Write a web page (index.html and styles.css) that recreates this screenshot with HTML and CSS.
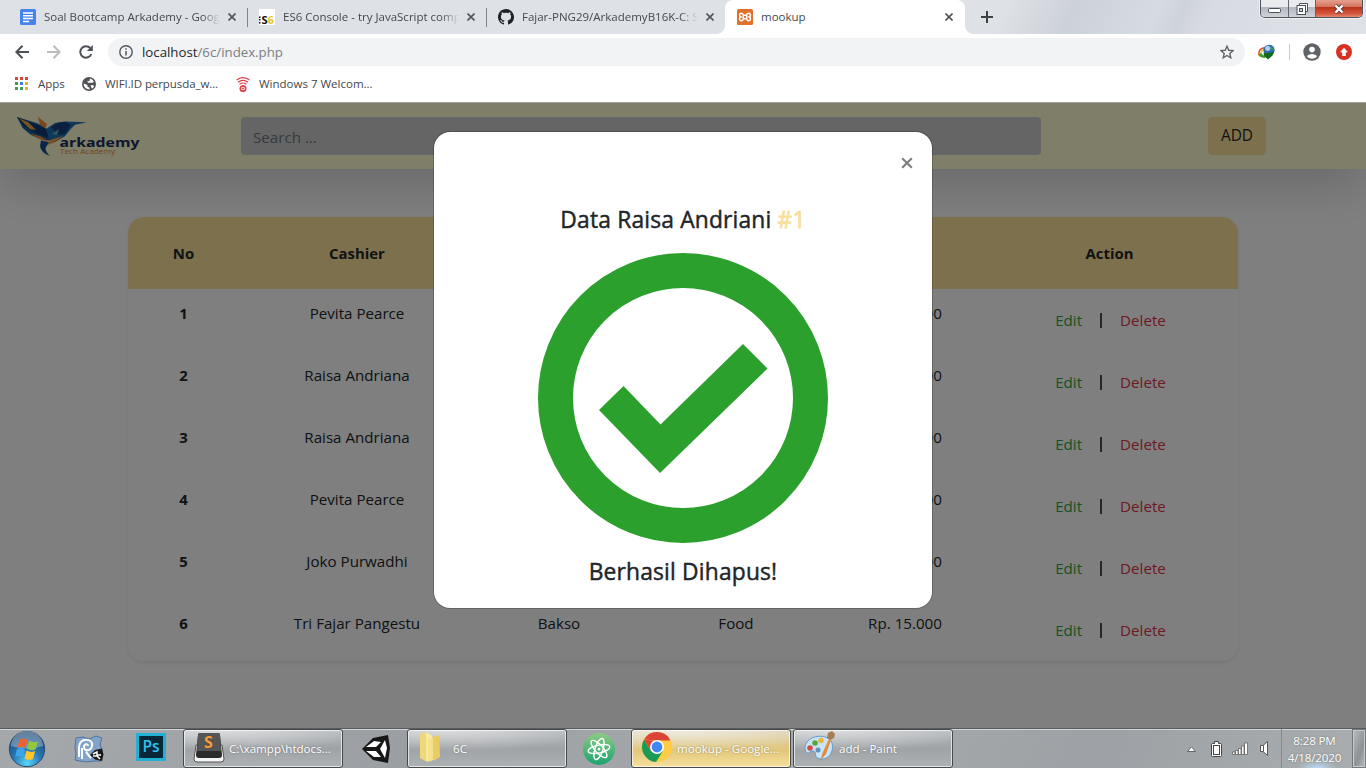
FILE: index.html
```html
<!DOCTYPE html>
<html lang="en">
<head>
<meta charset="utf-8">
<title>mookup</title>
<link rel="stylesheet" href="styles.css">
</head>
<body>
<div class="screen">
  <header class="tabstrip">
    <div class="tab">
      <svg width="16" height="16" viewBox="0 0 16 16"><rect width="16" height="16" rx="1.5" fill="#4683ec"/><path d="M3 4h10M3 6.8h10M3 9.6h10M3 12.4h6" stroke="#fff" stroke-width="1.5"/></svg>
      <span class="tab-title fade t1">Soal Bootcamp Arkademy - Google</span>
      <svg class="x" viewBox="0 0 8 8"><path d="M.5.5l7 7M7.500.500l-7 7"/></svg>
    </div>
    <div class="tab sep">
      <svg width="16" height="16" viewBox="0 0 16 16"><rect width="16" height="16" fill="#fff"/><path d="M0 7.500h1.500v1.500H0zM0 10h1.500v1.500H0zM0 13h1.500v1.500H0z" fill="#111"/><text x="2.500" y="14.500" class="es" textLength="12.500" lengthAdjust="spacingAndGlyphs">S<tspan class="six">6</tspan></text></svg>
      <span class="tab-title fade t2">ES6 Console - try JavaScript compiler</span>
      <svg class="x" viewBox="0 0 8 8"><path d="M.5.5l7 7M7.500.500l-7 7"/></svg>
    </div>
    <div class="tab sep">
      <svg width="16" height="16" viewBox="0 0 16 16" fill="#1f2226"><path d="M8 0C3.580 0 0 3.580 0 8c0 3.540 2.290 6.530 5.470 7.590.4.070.55-.17.55-.38 0-.19-.010-.82-.010-1.490-2.010.37-2.530-.49-2.690-.94-.090-.23-.48-.94-.82-1.130-.28-.15-.68-.52-.010-.53.63-.010 1.080.58 1.230.82.72 1.210 1.870.87 2.330.66.070-.52.28-.87.51-1.070-1.780-.2-3.640-.89-3.640-3.950 0-.87.31-1.590.82-2.150-.080-.2-.36-1.020.080-2.120 0 0 .67-.21 2.200.82.64-.18 1.320-.27 2-.27s1.360.09 2 .27c1.530-1.040 2.200-.82 2.200-.82.44 1.100.16 1.920.080 2.120.51.56.82 1.270.82 2.150 0 3.070-1.870 3.750-3.650 3.950.29.25.54.73.54 1.480 0 1.070-.010 1.930-.010 2.200 0 .21.15.46.55.38A8 8 0 0 0 8 0z"/></svg>
      <span class="tab-title fade t3">Fajar-PNG29/ArkademyB16K-C: Soal</span>
      <svg class="x" viewBox="0 0 8 8"><path d="M.5.5l7 7M7.500.500l-7 7"/></svg>
    </div>
    <div class="tab active">
      <svg width="16" height="16" viewBox="0 0 16 16"><rect width="16" height="16" rx="1.500" fill="#e0702c"/><path d="M5.600 6.200h4.800M5.600 9.800h4.800M6.300 5.500v5M9.700 5.500v5M6.300 6a1.900 1.900 0 1 0-2.500 2A1.900 1.900 0 1 0 6.300 10M9.700 6a1.900 1.900 0 1 1 2.500 2A1.900 1.900 0 1 1 9.700 10" fill="none" stroke="#fff" stroke-width="1.500"/></svg>
      <span class="tab-title t4">mookup</span>
      <svg class="x" viewBox="0 0 8 8"><path d="M.5.5l7 7M7.500.500l-7 7"/></svg>
    </div>
    <div class="newtab"><svg width="12" height="12" viewBox="0 0 12 12"><path d="M6 0v12M0 6h12" stroke="#3c4043" stroke-width="2"/></svg></div>
    <div class="winbtns">
      <div class="wb min"><svg width="13" height="6" viewBox="0 0 13 6"><rect x=".5" y=".5" width="12" height="4" rx="1" fill="#fff" stroke="#4a4f5a"/></svg></div>
      <div class="wb res"><svg width="13" height="12" viewBox="0 0 13 12"><path d="M3.500 2.500v-2h8v8h-2" fill="#fff" stroke="#4a4f5a"/><rect x="1" y="2.500" width="8.500" height="9" fill="#fff" stroke="#4a4f5a"/><rect x="3.500" y="5.500" width="3" height="3" fill="#ccc" stroke="#4a4f5a"/></svg></div>
      <div class="wb cls"><svg width="12" height="10" viewBox="0 0 12 10"><path d="M2.500 1.500l7 7M9.500 1.500l-7 7" stroke="#5d3335" stroke-width="4"/><path d="M2.500 1.500l7 7M9.500 1.500l-7 7" stroke="#fff" stroke-width="2.400"/></svg></div>
    </div>
  </header>

  <div class="toolbar">
    <svg class="nav" viewBox="0 0 14 14"><path d="M14 7H1.500M7.500 .8L1.300 7l6.200 6.200" stroke="#4d5156"/></svg>
    <svg class="nav" viewBox="0 0 14 14"><path d="M0 7h12.500M6.500 .8L12.700 7l-6.200 6.200" stroke="#babcbe"/></svg>
    <svg class="nav" viewBox="0 0 14 14"><path d="M12.300 9A5.700 5.700 0 1 1 11.300 3.200" stroke="#4d5156"/><path d="M13.800 0v6H7.800z" fill="#4d5156"/></svg>
    <div class="omnibox">
      <svg width="14" height="14" viewBox="0 0 14 14"><circle cx="7" cy="7" r="6.200" fill="none" stroke="#55585c" stroke-width="1.400"/><path d="M7 6v4.500M7 3.300v1.500" stroke="#55585c" stroke-width="1.500"/></svg>
      <span class="url">localhost<span>/6c/index.php</span></span>
      <svg class="star" width="14" height="14" viewBox="0 0 24 24"><path d="M12 2l3 7 7.500.600-5.700 5 1.700 7.400L12 18l-6.500 4 1.700-7.400-5.700-5L9 9z" fill="none" stroke="#5f6368" stroke-width="2.300"/></svg>
    </div>
    <svg class="idm" width="17" height="16" viewBox="0 0 17 16"><path d="M8 3.500Q2 4 1 8t3 4.500" fill="none" stroke="#d9542a" stroke-width="1.500"/><path d="M8 5Q3 6 3 9t2 3" fill="none" stroke="#f0c93a" stroke-width="1.500"/><path d="M1 10q1 4 6 4l2-2q-4 0-6-3z" fill="#3f9d2c"/><circle cx="11" cy="6.300" r="5.600" fill="#2d6ab0"/><circle cx="9.700" cy="4.300" r="2.600" fill="#a9cff1"/><path d="M5.500 8.500q5 1.500 10.500-1l-1.500 4-4.500 4-4-4z" fill="#14691c"/><path d="M12 3q3 0 3.500 2.500l-2 1z" fill="#4d9b4a"/></svg>
    <i class="tb-sep"></i>
    <svg class="user" width="18" height="18" viewBox="0 0 18 18"><circle cx="9" cy="9" r="8.700" fill="#5f6368"/><circle cx="9" cy="6.600" r="2.800" fill="#fff"/><path d="M3.800 13q5.200-4 10.400 0a6.200 6.200 0 0 1-10.400 0z" fill="#fff"/></svg>
    <svg class="upd" width="16" height="16" viewBox="0 0 16 16"><circle cx="8" cy="8" r="8" fill="#d93025"/><path d="M8 3.800l4 4.400H9.800V12H6.200V8.200H4z" fill="#fff"/></svg>
  </div>

  <nav class="bookmarks">
    <svg width="14" height="14" viewBox="0 0 14 14"><path d="M0 0h3v3H0zM5 0h3v3H5zM10 0h3v3h-3z" fill="#d64539"/><path d="M0 5h3v3H0zM0 10h3v3H0zM5 10h3v3H5z" fill="#43985b"/><path d="M5 5h3v3H5z" fill="#3f7fe0"/><path d="M10 5h3v3h-3zM10 10h3v3h-3z" fill="#e9ae2c"/></svg>
    <span class="b1">Apps</span>
    <svg class="g" width="14" height="14" viewBox="0 0 14 14"><circle cx="7" cy="7" r="7" fill="#505356"/><path d="M1.500 6.500l4 1.500v2l2 .5v2Q2 12 1.500 6.500zM8 1.500q3 .500 4 3.500L9.500 6 8 5.500 6.500 6 5 4.500l2.500-.5zM8.500 8.500l2-.5 1.700 1q-.7 1.800-2.200 2.700z" fill="#fff"/></svg>
    <span class="b2">WIFI.ID perpusda_w...</span>
    <svg class="w" width="14" height="15" viewBox="0 0 14 15"><g fill="none" stroke="#dc4349" stroke-width="1.200"><path d="M.6 3Q7-1.800 13.400 3M2 5.300Q7 1.500 12 5.300M3.600 7.300Q7 4.700 10.400 7.300"/><circle cx="7" cy="11.500" r="2.700" stroke-width="1.700"/></g><circle cx="7" cy="11.500" r="1" fill="#dc4349"/></svg>
    <span class="b3">Windows 7 Welcom...</span>
  </nav>

  <main class="page">
    <div class="navbar">
      <svg class="logo" width="124" height="42" viewBox="0 0 124 42">
        <path d="M21 1l9 7-2 5-5-4z" fill="#f08c3a"/>
        <path d="M0 1l21 6.500L32 15l4 10-11-1.300-11.300-5L5.700 12z" fill="#1b5b9e"/>
        <path d="M0 1l6 8 14 9 14 5-4-10z" fill="#123a75"/>
        <path d="M2 2.500l9 3.500 8 8-6-1z" fill="#f5a93a"/>
        <path d="M13 17.500l10 2.500 8 5-6-1z" fill="#ee8830"/>
        <path d="M29 13l9-6 10-1.500 22 .8-12 2.500-5 5-5 6.500-12 6.700-4-4z" fill="#1c6fb3"/>
        <path d="M34 11l8-4.500 7-.5 5 3-6 9-6 1z" fill="#17417c"/>
        <path d="M35 18l7-5-2 6z" fill="#57bdb3"/>
        <path d="M33 24l13-4-10 7-6 2z" fill="#f3a13d"/>
        <path d="M24 24.500l8 1.500-3.500 6q0 4 4.500 8-9-3-10-10z" fill="#174a91"/>
        <text x="42.500" y="30.700" class="logo-a" textLength="80" lengthAdjust="spacingAndGlyphs">arkademy</text>
        <text x="43" y="38.400" class="logo-b" textLength="55" lengthAdjust="spacingAndGlyphs">Tech Academy</text>
      </svg>
      <div class="search">Search ...</div>
      <button class="add">ADD</button>
    </div>

    <section class="card">
      <div class="row head"><b>No</b><b>Cashier</b><b>Product</b><b>Category</b><b>Price</b><b>Action</b></div>
      <div class="row"><b>1</b><span>Pevita Pearce</span><span></span><span></span><span>Rp. 10.000</span><div class="act"><a class="edit">Edit</a><i></i><a class="del">Delete</a></div></div>
      <div class="row"><b>2</b><span>Raisa Andriana</span><span></span><span></span><span>Rp. 10.000</span><div class="act"><a class="edit">Edit</a><i></i><a class="del">Delete</a></div></div>
      <div class="row"><b>3</b><span>Raisa Andriana</span><span></span><span></span><span>Rp. 10.000</span><div class="act"><a class="edit">Edit</a><i></i><a class="del">Delete</a></div></div>
      <div class="row"><b>4</b><span>Pevita Pearce</span><span></span><span></span><span>Rp. 10.000</span><div class="act"><a class="edit">Edit</a><i></i><a class="del">Delete</a></div></div>
      <div class="row"><b>5</b><span>Joko Purwadhi</span><span></span><span></span><span>Rp. 10.000</span><div class="act"><a class="edit">Edit</a><i></i><a class="del">Delete</a></div></div>
      <div class="row"><b>6</b><span>Tri Fajar Pangestu</span><span>Bakso</span><span>Food</span><span>Rp. 15.000</span><div class="act"><a class="edit">Edit</a><i></i><a class="del">Delete</a></div></div>
    </section>

    <div class="backdrop"></div>
    <div class="modal">
      <div class="modal-close"><svg width="12" height="12" viewBox="0 0 12 12"><path d="M1.200 1.200l9.600 9.600M10.800 1.200l-9.600 9.600" stroke="#7f7f7f" stroke-width="2.200"/></svg></div>
      <h4 class="m1">Data Raisa Andriani <span>#1</span></h4>
      <svg class="check" width="290" height="290" viewBox="0 0 290 290"><circle cx="145" cy="145" r="127.500" fill="none" stroke="#2ca02c" stroke-width="35"/><path d="M61 157l24.500-24 37 38.500L205 91l24.500 24.500L122 220z" fill="#2ca02c"/></svg>
      <h4 class="m2">Berhasil Dihapus!</h4>
    </div>
  </main>

  <footer class="taskbar">
    <svg class="start" width="38" height="38" viewBox="0 0 38 38"><defs><radialGradient id="orb" cx=".5" cy=".9" r=".8"><stop offset="0" stop-color="#58d8fa"/><stop offset=".5" stop-color="#2877b5"/><stop offset="1" stop-color="#214e7c"/></radialGradient></defs><circle cx="19" cy="19" r="17.700" fill="url(#orb)" stroke="#284d6d"/><path d="M3 16a16 15 0 0 1 32 0q-16 5-32 0z" fill="#fff" opacity=".3"/><path d="M11.500 9.500q4-2 8 .5l-2 8q-4-2-8-.5z" fill="#ee6130"/><path d="M21 10.800q4.500 2.500 9 .5l-2.300 8q-4.200 2-8.700-.5z" fill="#90c83f"/><path d="M9 19q4-2 8 .5l-2 8q-4-2.500-8-.5z" fill="#3ea4ea"/><path d="M18.500 20.500q4.500 2.500 8.700.5l-2.200 8q-4.500 2-8.500-.5z" fill="#fdc729"/></svg>
    <svg class="pp" width="30" height="28" viewBox="0 0 30 28"><path d="M2 3l7-1 6 2 7-3 6 2-2 6 2 6-2 6 1 5-7 0-7 1-7-1-5-1 1-6-1-7z" fill="#83a3c7" stroke="#4d74a3"/><path d="M5 22V12c0-10 15-9 13-1-1 5-8 6-8 1 0-3 4-4 4-1M12 17l5 6M8 24V13" fill="none" stroke="#fff" stroke-width="2"/><path d="M16 20l5-5 7-1.500 1.500 6-1.500 6.500-7-1.500z" fill="#1b1b1b"/><path d="M19 19l4-2v3h4M19 21h4l3 3" fill="none" stroke="#fff" stroke-width="1.500"/></svg>
    <div class="ps">Ps</div>
    <div class="task tk1">
      <svg width="32" height="32" viewBox="0 0 32 32"><path d="M3 14L1 28q0 3 3 3h24q3 0 3-3l-2-14z" fill="#f3f3f3" stroke="#555"/><path d="M5 4q0-2 2-2h18q2 0 2 2l2 20q0 3-3 3H6q-3 0-3-3z" fill="#2b2b2b"/><path d="M5 4q0-2 2-2h18q2 0 2 2l1 16H4z" fill="#565656"/><text x="11" y="17" class="sub">S</text></svg>
      <span>C:\xampp\htdocs...</span>
    </div>
    <svg class="unity" width="30" height="30" viewBox="0 0 30 30"><path d="M1 15L12 4l15-3 2 13-2 15-15-3z" fill="#171717"/><path d="M5 13l8-6 7 1-5 5zM5 17h10l5 6-7 0zM24 6l2 8-2 10-5-9z" fill="#fff"/></svg>
    <div class="task tk2">
      <svg width="32" height="32" viewBox="0 0 32 32"><path d="M3 3l6-2 6 4 0 25-5 1-7-4z" fill="#efd878"/><path d="M9 1l6 4v22l-6 3z" fill="#f9e9a4"/><path d="M15 6l7-2 1 22-7 4z" fill="#e8cd66"/><path d="M11 8l5-1v22l-5 1z" fill="#f6e28c"/></svg>
      <span>6C</span>
    </div>
    <svg class="atom" width="32" height="32" viewBox="0 0 32 32"><defs><linearGradient id="at" x1="0" y1="0" x2="0" y2="1"><stop offset="0" stop-color="#8ccb82"/><stop offset="1" stop-color="#1ba36e"/></linearGradient></defs><circle cx="16" cy="16" r="16" fill="url(#at)"/><g fill="none" stroke="#fff" stroke-width="1.400"><ellipse cx="16" cy="16" rx="11" ry="4" transform="rotate(-12 16 16)"/><ellipse cx="16" cy="16" rx="11" ry="4" transform="rotate(48 16 16)"/><ellipse cx="16" cy="16" rx="11" ry="4" transform="rotate(108 16 16)"/></g><circle cx="16" cy="16" r="1.500" fill="#fff"/></svg>
    <div class="task tk3">
      <svg width="32" height="32" viewBox="0 0 32 32"><circle cx="16" cy="16" r="15" fill="#fc4"/><path d="M3 8.500A15 15 0 0 1 29.500 9.500H16z" fill="#dc4437"/><path d="M3 8.500A15 15 0 0 0 15 31l7-11-12 0z" fill="#1a9b55"/><path d="M3 8.500L10 20l6-10z" fill="#dc4437"/><circle cx="16" cy="16" r="7" fill="#fff"/><circle cx="16" cy="16" r="5.400" fill="#4285f4"/></svg>
      <span>mookup - Google...</span>
    </div>
    <div class="task tk4">
      <svg width="32" height="32" viewBox="0 0 32 32"><path d="M2 16C4 3 26 2 29 12c3 12-8 20-16 14-1-3 0-6-3-6-4 0-4 3-6 2-2-2-2-4-2-6z" fill="#c9e4f6" stroke="#609dc9"/><circle cx="7" cy="17" r="2.800" fill="#d84a42"/><circle cx="12" cy="12" r="2.800" fill="#55a83d"/><circle cx="18" cy="9.500" r="2.800" fill="#eeb63c"/><circle cx="15" cy="19" r="2.500" fill="#6495b8"/><path d="M17 30l3-9 6-13 2 1-5 14z" fill="#e58a3b"/><path d="M24 7l1-5 4-2 3 3-1 4-4 2z" fill="#a87c55"/></svg>
      <span>add - Paint</span>
    </div>
    <div class="tray">
      <svg width="9" height="6" viewBox="0 0 9 6"><path d="M.5 5.500h8L4.500 .8z" fill="#fff" stroke="#666"/></svg>
      <svg class="bat" width="11" height="16" viewBox="0 0 11 16"><path d="M3.500 .5h4v2H9.500q1 0 1 1v11q0 1-1 1h-8q-1 0-1-1v-11q0-1 1-1h2z" fill="#fff" stroke="#444"/><rect x="2.500" y="4.500" width="6" height="9" fill="#fff" stroke="#444"/></svg>
      <svg class="sig" width="17" height="13" viewBox="0 0 17 13"><path d="M.5 10h2.500v2.500H.5zM3.500 8.500h2.500v4H3.500zM6.500 6.500h2.500v6H6.500zM9.500 4h2.500v8.500H9.500zM12.500 1h3v11.500h-3z" fill="#fff" stroke="#555" stroke-width=".7"/></svg>
      <svg class="vol" width="9" height="15" viewBox="0 0 9 15"><path d="M.5 4.500h2.500l4.500-4v14l-4.500-4H.5z" fill="#fff" stroke="#555"/><path d="M3.500 4.500v6" stroke="#555"/></svg>
      <div class="clock"><span class="c1">8:28 PM</span><span class="c2">4/18/2020</span></div>
      <i class="desk"></i>
    </div>
  </footer>
</div>
</body>
</html>
```
FILE: styles.css
```css
* { box-sizing: border-box; }
body { margin: 0; font-family: "Open Sans", "Noto Sans", sans-serif; background: #fff; }
svg { flex: none; display: block; }
.screen { width: 1366px; height: 768px; display: flex; flex-direction: column; overflow: hidden; }

.tabstrip { height: 34px; flex: none; display: flex; padding-left: 8px; background: linear-gradient(115deg, #dee1e5 0 73%, #cdd1d9 78%, #d6dae2 84%, #cfd3dc 86%, #d8dbe2 88%, #dfe3e8 100%); }
.tab { position: relative; width: 239px; display: flex; align-items: center; padding: 0 11px 0 12px; background: #dee1e6; border-radius: 8px 8px 0 0; }
.tab.sep::before { content: ""; position: absolute; left: 0; top: 8px; width: 1px; height: 19px; background: #80858b; }
.tab-title { margin-left: 8px; width: 176px; overflow: hidden; white-space: nowrap; font-size: 11.500px; line-height: 18px; color: #45494d; }
.fade { -webkit-mask-image: linear-gradient(to right, #000 158px, transparent 176px); mask-image: linear-gradient(to right, #000 158px, transparent 176px); }
.x { width: 8px; height: 8px; margin-left: auto; stroke: #505357; stroke-width: 1.600; fill: none; }
.tab.active { width: 240px; padding-right: 12px; background: #fff; z-index: 1; }
.tab.active::before, .tab.active::after { content: ""; position: absolute; bottom: 0; width: 8px; height: 8px; }
.tab.active::before { left: -8px; background: radial-gradient(circle at 0 0, transparent 7.500px, #fff 8px); }
.tab.active::after { right: -8px; background: radial-gradient(circle at 100% 0, transparent 7.500px, #fff 8px); }
.newtab { width: 28px; height: 28px; margin: 3px 0 0 8px; border-radius: 50%; background: #dee1e6; display: flex; align-items: center; justify-content: center; }
.winbtns { margin-left: auto; margin-right: 3px; height: 18px; width: 103px; display: flex; border: 1px solid #50545c; border-top: 0; border-radius: 0 0 5px 5px; overflow: hidden; box-shadow: 0 0 0 1px rgba(255,255,255,.5); }
.wb { display: flex; align-items: center; justify-content: center; background: linear-gradient(#e9eaed 0 40%, #b2b6c0 42%, #d0d3da); }
.min { width: 28px; padding-top: 4px; border-right: 1px solid #62666e; }
.res { width: 27px; border-right: 1px solid #62666e; }
.cls { flex: 1; background: linear-gradient(#e5a08c, #d4735b 40%, #bb3318 44%, #d4573d 80%, #e28a70); }
.es { font: 700 11px "Open Sans", sans-serif; fill: #111; }
.six { fill: #eec22f; }

.toolbar { height: 35px; flex: none; display: flex; align-items: center; padding: 1px 14px 0 15px; background: #fff; }
.nav { width: 14px; height: 14px; margin-right: 18px; fill: none; stroke-width: 2; }
.toolbar .nav:nth-child(3) { margin-right: 15px; }
.omnibox { width: 1137px; height: 28px; display: flex; align-items: center; padding: 0 11px; background: #f1f3f4; border-radius: 14px; }
.url { margin-left: 9px; font-size: 13.250px; line-height: 20px; color: #24272a; }
.url span { color: #7b8085; }
.star { margin-left: auto; }
.idm { margin-left: 13px; }
.tb-sep { width: 1px; height: 16px; margin-left: 14px; background: #c9cbce; }
.user { margin-left: 13px; }
.upd { margin-left: 15px; }

.bookmarks { height: 33px; flex: none; display: flex; align-items: center; padding: 0 15px 3px; font-size: 11.500px; line-height: 16px; color: #43474b; white-space: nowrap; background: #fff; }
.b1 { margin-left: 9px; width: 27px; }
.g { margin-left: 17px; }
.b2 { margin-left: 9px; width: 113px; letter-spacing: -.08px; }
.w { margin-left: 18px; }
.b3 { margin-left: 9px; }

.page { position: relative; height: 626px; flex: none; border-top: 1px solid #a5a29d; background: #fff; font-size: 15.150px; line-height: 24px; color: #212529; overflow: hidden; }
.navbar { height: 66px; display: flex; align-items: center; padding: 0 16px; background: #fffcd0; box-shadow: 0 16px 48px rgba(0,0,0,.175); }
.logo { margin: 2px 0 0 1px; }
.logo-a { font: 700 11.500px "Open Sans", sans-serif; fill: #1b2c60; }
.logo-b { font: 6.500px "Open Sans", sans-serif; fill: #e38a3c; }
.search { width: 800px; height: 38px; margin-left: 100px; padding: 8px 12px; border-radius: 4px; background: #cacaca; color: #6c757d; line-height: 24px; }
.add { width: 58px; height: 38px; margin-left: 167px; padding: 0 0 1px; border: 0; border-radius: 4px; background: #fae39b; color: #212529; font: 15.400px "Open Sans", sans-serif; }
.card { width: 1110px; margin: 48px 0 0 128px; border-radius: 16px; overflow: hidden; background: #fff; box-shadow: 0 2px 4px rgba(0,0,0,.075); }
.row { height: 62px; display: grid; grid-template-columns: 111px 236px 168px 186px 152px 257px; padding-top: 12px; text-align: center; }
.row b { font-size: 14.900px; }
.row.head { height: 72px; padding-top: 24px; background: #fae39b; }
.act { display: flex; justify-content: center; align-items: flex-start; padding: 7px 0 0 2px; }
.act i { width: 2px; height: 15px; margin: 5px 18px 0; background: #4a4e52; }
.edit { color: #28a745; }
.del { color: #dc3545; }
.backdrop { position: absolute; inset: 0; background: rgba(0,0,0,.5); }
.modal { position: absolute; left: 433px; top: 28px; width: 500px; height: 478px; display: flex; flex-direction: column; align-items: center; background: #fff; background-clip: padding-box; border: 1px solid rgba(0,0,0,.2); border-radius: 17px; }
.modal-close { align-self: flex-end; margin: 25px 19px 0 0; }
.modal h4 { margin: 0; font-size: 22.800px; line-height: 29px; font-weight: 500; letter-spacing: .18px; white-space: nowrap; -webkit-text-stroke: .45px currentColor; }
.modal h4 span { color: #f7e09c; -webkit-text-stroke-width: .8px; }
.modal .m1 { margin-top: 36px; }
.check { margin-top: 19px; }
.modal .m2 { margin-top: 14px; }

.taskbar { height: 40px; flex: none; display: flex; align-items: center; border-top: 1px solid #585b5e; box-shadow: inset 0 1px #d4d7d9; background: linear-gradient(110deg, #a5a8ab, #9b9fa3 30%, #a7abae 60%, #9da1a5 80%, #a8adb0); color: #fff; font-size: 11.600px; text-shadow: 0 0 2px rgba(60,60,60,.5); }
.start { margin-left: 8px; }
.pp { margin-left: 28px; }
.ps { width: 30px; height: 28px; margin: -3px 0 0 32px; border: 3px solid #22b0d5; background: #08283a; color: #2bc4ee; font: 600 15.500px/21px "Open Sans", sans-serif; text-align: center; text-shadow: none; }
.task { width: 160px; height: 39px; display: flex; align-items: center; padding-left: 9px; border: 1px solid #46494c; border-radius: 3px; box-shadow: inset 0 0 0 1px rgba(255,255,255,.65); background: radial-gradient(ellipse 140px 22px at 40px 0, rgba(255,255,255,.5), transparent), linear-gradient(#b9bcbf, #9fa3a6 50%, #acb1b4); white-space: nowrap; }
.task span { margin-left: 4px; }
.task svg { margin-top: -3px; }
.tk1 { margin-left: 17px; }
.unity { margin-left: 18px; }
.tk2 { margin-left: 16px; }
.atom { margin-left: 16px; }
.tk3 { margin-left: 16px; background: radial-gradient(ellipse 150px 20px at 50px 0, rgba(245,242,235,.8), transparent), linear-gradient(#dcd2b6, #e2c77b 55%, #f6e09b); }
.tk4 { margin-left: 2px; }
.sub { font: 700 16px "Open Sans", sans-serif; fill: #f89a35; }
.tray { margin-left: auto; height: 39px; display: flex; align-items: center; }
.bat { margin-left: 15px; }
.sig { margin-left: 10px; }
.vol { margin-left: 11px; }
.clock { width: 71px; height: 39px; margin-left: 12px; padding-right: 5px; display: flex; flex-direction: column; align-items: center; justify-content: center; line-height: 17px; letter-spacing: -.15px; border-left: 1px solid #85898c; background: radial-gradient(ellipse 20px 8px at 50% 100%, #b9dcf5, transparent); }
.desk { width: 14px; height: 39px; border: 1px solid #74787b; box-shadow: inset 0 0 0 1px #c5c9cc; background: linear-gradient(110deg, #b8bcbf, #8e9296 60%, #b5babd); }
```
